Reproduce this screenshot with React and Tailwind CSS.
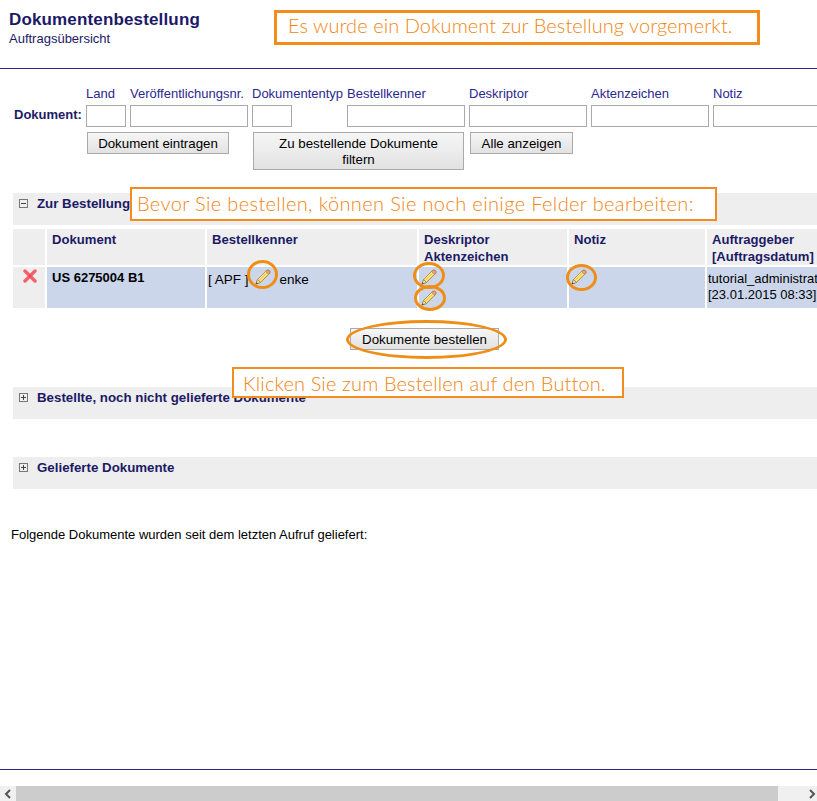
import React from 'react';

const Pencil = () => (
    <svg width="18" height="18" viewBox="0 0 18 18" className="block">
        <path d="M2 16 L3.5 11.5 L12.5 2.5 Q14 1.5 15.5 2.7 Q16.6 4 15.5 5.5 L6.5 14.5 Z" fill="#f7d04f" stroke="#a8843a" strokeWidth="0.8" />
        <path d="M4.5 11.5 L13 3.2 M6 13 L14.5 4.6" stroke="#fdf0b0" strokeWidth="1" fill="none" />
        <path d="M12.5 2.5 Q14 1.5 15.5 2.7 Q16.6 4 15.5 5.5 L14.6 6.4 L11.6 3.4 Z" fill="#e9a07c" stroke="#a8743a" strokeWidth="0.6" />
        <path d="M2 16 L3.5 11.5 L6.5 14.5 Z" fill="#f3dfb8" stroke="#8a6a3a" strokeWidth="0.6" />
        <path d="M2 16 L2.6 14.2 L3.8 15.4 Z" fill="#333" />
    </svg>
);

const Cross = () => (
    <svg width="14" height="14" viewBox="0 0 14 14" className="block">
        <path d="M2 2 L12 12 M12 2 L2 12" stroke="#f5606a" strokeWidth="3.4" strokeLinecap="round" />
        <circle cx="7" cy="7" r="1.6" fill="#ec4552" />
    </svg>
);

const Toggle = ({ open }) => (
    <svg width="9" height="9" viewBox="0 0 9 9" className="block shrink-0">
        <rect x="0.5" y="0.5" width="8" height="8" fill="none" stroke="#777" />
        <path d={open ? 'M2 4.5 H7' : 'M2 4.5 H7 M4.5 2 V7'} stroke="#444" />
    </svg>
);

const Callout = ({ className, children }) => (
    <div className={`absolute bg-white border-[#f28c1c] text-[#f08612] font-['Lato',sans-serif] font-light flex items-center whitespace-nowrap ${className}`}>
        {children}
    </div>
);

const Ring = ({ className }) => (
    <div className={`absolute rounded-[50%] border-[3px] border-[#ee8e16] ${className}`} />
);

const Section = ({ title, open, className = '' }) => (
    <div className={`h-8 bg-[#eeeeee] flex items-start pl-[6px] pt-[2px] gap-[9px] font-bold text-[13.3px] leading-[17px] text-[#1c1a66] ${className}`}>
        <span className="mt-[4px]"><Toggle open={open} /></span>
        <span>{title}</span>
    </div>
);

const btn = 'border border-[#aaaaaa] bg-gradient-to-b from-[#f6f6f6] to-[#e2e2e2] text-[13.3px] leading-[16px] pt-px text-black';
const input = 'h-[22px] w-full border border-[#aaaaaa] bg-white';

const labels = ['Land', 'Veröffentlichungsnr.', 'Dokumententyp', 'Bestellkenner', 'Deskriptor', 'Aktenzeichen', 'Notiz'];

const App = () => {
    return (
        <div className="relative w-[817px] h-[801px] overflow-hidden bg-white flex flex-col font-['Liberation_Sans',Arial,sans-serif] text-[12px]">
            <header className="h-[69px] shrink-0 border-b border-[#2b2890] pl-[9px] pt-[10px]">
                <h1 className="font-bold text-[17px] tracking-[0.15px] leading-[19px] text-[#1c1a66]">Dokumentenbestellung</h1>
                <p className="text-[13px] leading-[14px] mt-[3px] text-[#1c1a66]">Auftragsübersicht</p>
            </header>

            <form className="mt-[18px] ml-[14px] grid grid-cols-[68px_40px_118px_91px_118px_118px_118px_118px] gap-x-[4px] w-[900px]">
                <div />
                {labels.map((l) => (
                    <label key={l} className="text-[#2b2890] leading-[14px] h-[18px] text-[13px] whitespace-nowrap">{l}</label>
                ))}
                <div className="font-bold text-[13px] text-[#1c1a66] leading-[20px] text-left whitespace-nowrap">Dokument:</div>
                <input className={input} />
                <input className={input} />
                <input className={`${input} !w-[40px]`} />
                <input className={input} />
                <input className={input} />
                <input className={input} />
                <input className={input} />
                <div />
                <button type="button" className={`${btn} col-span-2 h-[22px] w-[142px] ml-[1px] mt-[5px]`}>Dokument eintragen</button>
                <button type="button" className={`${btn} col-span-2 h-[38px] w-[211px] ml-[1px] mt-[5px] px-[20px] self-start`}>Zu bestellende Dokumente filtern</button>
                <button type="button" className={`${btn} h-[22px] w-[103px] ml-[1px] mt-[5px]`}>Alle anzeigen</button>
            </form>

            <div className="ml-[13px] mt-[23px]">
                <Section title="Zur Bestellung" open />

                <div className="mt-[4px] grid grid-cols-[32px_158px_210px_148px_136px_130px] gap-[2px] w-[830px]">
                    <div className="h-[36px] bg-[#eeeeee]" />
                    {[['Dokument'], ['Bestellkenner'], ['Deskriptor', 'Aktenzeichen'], ['Notiz'], ['Auftraggeber', '[Auftragsdatum]']].map((h) => (
                        <div key={h[0]} className="h-[36px] bg-[#eeeeee] px-[5px] pt-[2px] font-bold text-[13.1px] leading-[17px] text-[#1c1a66] whitespace-nowrap">
                            {h.map((t) => <div key={t}>{t}</div>)}
                        </div>
                    ))}
                    <div className="h-[41px] bg-[#eeeeee] pl-[10px] pt-[2px]"><Cross /></div>
                    <div className="bg-[#cbd6ea] px-[5px] pt-[2px] font-bold text-[13px] leading-[17px] text-black">US 6275004 B1</div>
                    <div className="bg-[#cbd6ea] pl-[1px] pt-[4px] text-[13.5px] leading-[17px] text-black flex items-start gap-[5px] whitespace-nowrap">
                        <span>[ APF ]</span>
                        <span className="-mt-[3px]"><Pencil /></span>
                        <span className="ml-[3px]">enke</span>
                    </div>
                    <div className="bg-[#cbd6ea] pl-[1px] pt-[1px]">
                        <Pencil />
                        <div className="mt-[3px]"><Pencil /></div>
                    </div>
                    <div className="bg-[#cbd6ea] pl-[1px] pt-[1px]"><Pencil /></div>
                    <div className="bg-[#cbd6ea] pl-[1px] pt-[4px] text-[13px] leading-[16px] text-black whitespace-nowrap overflow-hidden">
                        tutorial_administrator<br />[23.01.2015 08:33]
                    </div>
                </div>

                <div className="mt-[20px] flex">
                    <button type="button" className={`${btn} h-[22px] w-[149px] ml-[337px]`}>Dokumente bestellen</button>
                </div>

                <Section title="Bestellte, noch nicht gelieferte Dokumente" className="mt-[37px]" />
                <Section title="Gelieferte Dokumente" className="mt-[38px]" />
            </div>

            <p className="mt-[38px] ml-[11px] text-[13px] leading-[16px] text-black">Folgende Dokumente wurden seit dem letzten Aufruf geliefert:</p>

            <div className="mt-auto border-t border-[#2b2890] h-[17px] shrink-0" />
            <div className="h-[15px] shrink-0 flex bg-[#f0f0f0] text-[#555]">
                <div className="w-[16px] flex items-center justify-center">
                    <svg width="8" height="10" viewBox="0 0 8 10"><path d="M6 1 L2 5 L6 9" fill="none" stroke="#555" strokeWidth="2" /></svg>
                </div>
                <div className="w-[762px] bg-[#cccccc]" />
                <div className="flex-1 flex items-center justify-end pr-[1px]">
                    <svg width="8" height="10" viewBox="0 0 8 10"><path d="M2 1 L6 5 L2 9" fill="none" stroke="#555" strokeWidth="2" /></svg>
                </div>
            </div>

            <Callout className="left-[274px] top-[10px] w-[486px] h-[35px] border-[3px] pl-[11px] pb-[5px] text-[20px] tracking-[0.06px]">Es wurde ein Dokument zur Bestellung vorgemerkt.</Callout>
            <Callout className="left-[130px] top-[187px] w-[587px] h-[34px] border-[2px] pl-[5px] pb-[3px] text-[20px] tracking-[0.37px]">Bevor Sie bestellen, können Sie noch einige Felder bearbeiten:</Callout>
            <Callout className="left-[232px] top-[367px] w-[392px] h-[31px] border-[2px] pl-[9px] text-[20px] tracking-[0.12px]">Klicken Sie zum Bestellen auf den Button.</Callout>

            <Ring className="left-[247px] top-[260px] w-[31px] h-[29px]" />
            <Ring className="left-[413px] top-[262px] w-[32px] h-[27px]" />
            <Ring className="left-[414px] top-[285px] w-[32px] h-[26px]" />
            <Ring className="left-[566px] top-[264px] w-[31px] h-[27px]" />
            <Ring className="left-[346px] top-[320px] w-[161px] h-[39px]" />
        </div>
    );
};

export default App;
